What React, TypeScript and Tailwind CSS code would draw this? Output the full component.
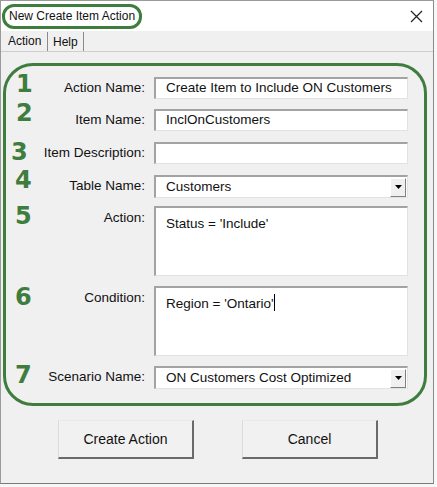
import type { ReactNode } from 'react';

const labelFont = { fontFamily: '"Liberation Sans", Arial, sans-serif' };

function Num({ n }: { n: string }) {
  return (
    <span
      className="font-bold text-[24px] leading-none text-[#3f7d3f]"
      style={{ fontFamily: '"DejaVu Sans", sans-serif' }}
    >
      {n}
    </span>
  );
}

function Field({ children, tall = false }: { children?: ReactNode; tall?: boolean }) {
  return (
    <div
      className={`w-[254px] ${tall ? 'h-[70px] items-start pt-[6px]' : 'h-[22px] items-center'} flex bg-white border-t-2 border-l-2 border-r border-b border-t-[#a3a3a3] border-l-[#a3a3a3] border-r-[#e2e2e2] border-b-[#e2e2e2] pl-[10px] text-[13.5px] text-[#111]`}
    >
      {children}
    </div>
  );
}

function Combo({ value }: { value: string }) {
  return (
    <div className="w-[254px] h-[23px] flex items-center bg-white border-t-2 border-l-2 border-r border-b border-t-[#a3a3a3] border-l-[#a3a3a3] border-r-[#e2e2e2] border-b-[#e2e2e2] pl-[10px] text-[13.5px] text-[#111]">
      <span className="flex-1">{value}</span>
      <div className="w-[16px] h-[19px] mr-[1px] flex items-center justify-center bg-[#f0f0f0] border-t border-l border-white border-r border-b border-r-[#808080] border-b-[#808080]">
        <svg width="7" height="4" viewBox="0 0 7 4">
          <path d="M0 0h7L3.5 4z" fill="#000" />
        </svg>
      </div>
    </div>
  );
}

function Row({
  num,
  numClass,
  label,
  children,
  top = false,
  className = '',
}: {
  num: string;
  numClass?: string;
  label: string;
  children: ReactNode;
  top?: boolean;
  className?: string;
}) {
  return (
    <div className={`flex ${top ? 'items-start' : 'items-center'} ${className}`}>
      <div className={`w-[148px] flex ${top ? 'items-start' : 'items-center'} relative`}>
        <div className={`absolute ${numClass}`}>
          <Num n={num} />
        </div>
        <span className={`ml-auto mr-[9px] text-[13.5px] text-[#111] ${top ? 'mt-[2px]' : ''}`}>{label}</span>
      </div>
      {children}
    </div>
  );
}

function Btn({ children }: { children: ReactNode }) {
  return (
    <div className="w-[136px] h-[39px] flex items-center justify-center bg-[#f1f1f1] border-t border-l border-t-[#e8e8e8] border-l-[#dcdcdc] border-r-2 border-b-2 border-r-[#6a6a6a] border-b-[#6a6a6a] text-[14px] text-[#111]">
      {children}
    </div>
  );
}

export default function App() {
  return (
    <div className="w-[437px] h-[487px] bg-[#f7f7f7] overflow-hidden" style={labelFont}>
      <div className="w-[434px] h-[484px] bg-[#f0f0f0] border border-[#9a9a9a] border-r-[#8a8a8a] border-b-[#7a7a7a] flex flex-col">
        {/* title bar */}
        <div className="h-[30px] bg-white flex items-center justify-between pl-[1px] pr-[10px]">
          <div className="h-[25px] px-[4px] flex items-center border-[3px] border-[#3f7d3f] rounded-[12px] text-[12px] text-[#111]">
            New Create Item Action
          </div>
          <svg width="13" height="13" viewBox="0 0 13 13">
            <path d="M1 1l11 11M12 1L1 12" stroke="#222" strokeWidth="1.2" />
          </svg>
        </div>

        {/* tabs */}
        <div className="h-[21px] flex items-end border-b border-[#cfcfcf] pl-[6px] text-[12px] text-[#111]">
          <div className="w-[40px] h-[20px] pl-[1px] flex items-center">Action</div>
          <div className="h-[19px] px-[5px] flex items-center border-l border-r border-l-[#8a8a8a] border-r-[#8a8a8a]">
            Help
          </div>
        </div>

        {/* numbered group */}
        <div className="mt-[11px] ml-[2px] w-[424px] h-[343px] border-[3px] border-[#3f7d3f] rounded-[30px] pt-[11px] flex flex-col">
          <Row num="1" numClass="left-[10px] -top-[6px]" label="Action Name:">
            <Field>Create Item to Include ON Customers</Field>
          </Row>
          <Row num="2" numClass="left-[10px] -top-[9px]" label="Item Name:" className="mt-[10px]">
            <Field>InclOnCustomers</Field>
          </Row>
          <Row num="3" numClass="left-[5px] -top-[3px]" label="Item Description:" className="mt-[11px]">
            <Field />
          </Row>
          <Row num="4" numClass="left-[9px] -top-[8px]" label="Table Name:" className="mt-[11px]">
            <Combo value="Customers" />
          </Row>
          <Row num="5" numClass="left-[9px] -top-[2px]" label="Action:" top className="mt-[8px]">
            <Field tall>Status = 'Include'</Field>
          </Row>
          <Row num="6" numClass="left-[9px] -top-[1px]" label="Condition:" top className="mt-[10px]">
            <Field tall>
              Region = 'Ontario'<span className="w-px h-[17px] bg-black" />
            </Field>
          </Row>
          <Row num="7" numClass="left-[9px] -top-[4px]" label="Scenario Name:" className="mt-[10px]">
            <Combo value="ON Customers Cost Optimized" />
          </Row>
        </div>

        {/* buttons */}
        <div className="mt-[14px] flex pl-[57px] gap-[48px]">
          <Btn>Create Action</Btn>
          <Btn>Cancel</Btn>
        </div>
      </div>
    </div>
  );
}
